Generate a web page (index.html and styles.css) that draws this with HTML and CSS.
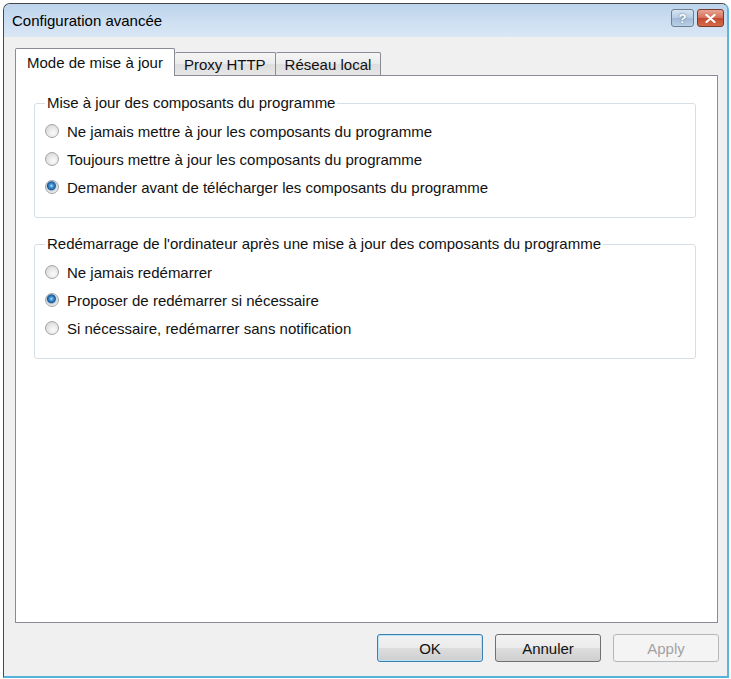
FILE: index.html
```html
<html>
<head>
    <link rel="stylesheet" href="styles.css">
</head>

<body>
    <div class="window">
        <div class="titlebar">
            <span class="title">Configuration avancée</span>
            <div class="controls">
                <span class="cbtn help">?</span>
                <span class="cbtn close">
                    <svg width="11" height="9" viewBox="0 0 11 9">
                        <path d="M1.5 1 L9.5 8 M9.5 1 L1.5 8" stroke="#fff" stroke-width="2.2" stroke-linecap="round"/>
                    </svg>
                </span>
            </div>
        </div>

        <form class="client" id="config">
            <div class="tabs">
                <span class="tab selected">Mode de mise à jour</span>
                <span class="tab">Proxy HTTP</span>
                <span class="tab">Réseau local</span>
            </div>

            <div class="panel">
                <fieldset class="group">
                    <legend>Mise à jour des composants du programme</legend>
                    <label class="option"><input type="radio" name="maj" value="never"> Ne jamais mettre à jour les composants du programme</label>
                    <label class="option"><input type="radio" name="maj" value="always"> Toujours mettre à jour les composants du programme</label>
                    <label class="option"><input type="radio" name="maj" value="ask" checked> Demander avant de télécharger les composants du programme</label>
                </fieldset>

                <fieldset class="group second">
                    <legend>Redémarrage de l'ordinateur après une mise à jour des composants du programme</legend>
                    <label class="option"><input type="radio" name="reboot" value="never"> Ne jamais redémarrer</label>
                    <label class="option"><input type="radio" name="reboot" value="propose" checked> Proposer de redémarrer si nécessaire</label>
                    <label class="option"><input type="radio" name="reboot" value="silent"> Si nécessaire, redémarrer sans notification</label>
                </fieldset>
            </div>

            <div class="buttons">
                <input class="btn default" type="submit" value="OK">
                <input class="btn" type="button" value="Annuler">
                <input class="btn" type="button" value="Apply" disabled>
            </div>
        </form>
    </div>
</body>
</html>
```

FILE: styles.css
```css
body{
    margin: 0;
    padding: 0;
    background: #fff;
    font-family: "Liberation Sans", Arial, sans-serif;
    font-size: 15px;
    color: #111;
}
.window{
    margin: 3px 0 0 3px;
    width: 726px;
    height: 675px;
    box-sizing: border-box;
    border: 1px solid #474747;
    border-right: 2px solid #5fb6da;
    border-bottom: 2px solid #56b2d8;
    border-radius: 7px 7px 0 0;
    background: #f0f0f0;
    display: flex;
    flex-direction: column;
    overflow: hidden;
}
.titlebar{
    height: 33px;
    flex: none;
    display: flex;
    align-items: center;
    padding: 0 3px 0 8px;
    background: linear-gradient(#bcd4ec, #cfe0f2 60%, #d9e7f5);
}
.title{
    font-size: 15px;
    color: #000;
}
.controls{
    margin-left: auto;
    align-self: flex-start;
    margin-top: 5px;
    display: flex;
    gap: 3px;
}
.cbtn{
    height: 18px;
    box-sizing: border-box;
    border: 1px solid #6e7f93;
    border-radius: 3px;
    display: flex;
    align-items: center;
    justify-content: center;
}
.help{
    width: 23px;
    background: linear-gradient(#d6e4f2, #b7cce2 50%, #a2bad6 51%, #b9d0e8);
    color: #fff;
    font-weight: bold;
    font-size: 13px;
    text-shadow: 0 0 2px #3b5f8a;
}
.close{
    width: 27px;
    border-color: #7a3a2e;
    background: linear-gradient(#e8a493, #d47058 50%, #c24a30 51%, #d56a4a);
}
.client{
    flex: 1;
    display: flex;
    flex-direction: column;
    margin: 0;
    padding: 11px 9px 0 11px;
}
.tabs{
    display: flex;
    align-items: flex-end;
    height: 28px;
    margin-bottom: -1px;
    position: relative;
    z-index: 1;
}
.tab{
    height: 23px;
    margin-bottom: 1px;
    box-sizing: border-box;
    padding: 0 9px;
    border: 1px solid #898c95;
    border-bottom: none;
    border-left: none;
    border-radius: 2px 2px 0 0;
    background: linear-gradient(#f6f6f6, #ebebeb 50%, #dedede 51%, #e6e6e6);
    display: flex;
    align-items: center;
    white-space: nowrap;
}
.tab.selected{
    height: 28px;
    margin-bottom: 0;
    padding: 0 11px;
    border-left: 1px solid #898c95;
    background: #fff;
}
.panel{
    flex: 1;
    border: 1px solid #898c95;
    background: #fff;
    padding: 19px 21px 0 18px;
}
.group{
    margin: 0;
    border: 1px solid #d5dfe5;
    border-radius: 3px;
    padding: 6px 10px 16px 10px;
}
.group legend{
    padding: 0 2px;
    line-height: 16px;
}
.group.second{
    margin-top: 18px;
}
.option{
    display: flex;
    align-items: center;
    height: 28px;
    gap: 8px;
    white-space: nowrap;
}
.option input{
    appearance: none;
    -webkit-appearance: none;
    width: 14px;
    height: 14px;
    margin: 0;
    flex: none;
    border: 1px solid #a3a6a8;
    border-radius: 50%;
    background: radial-gradient(circle at 60% 65%, #fbfbfb, #e4e4e4 55%, #cbcbcb);
}
.option input:checked{
    background: radial-gradient(circle at 45% 40%, #c3e8fc 0, #4f9fdc 1.5px, #1a5a9c 4px, #cfd6dc 5px, #ececec 7px);
}
.buttons{
    flex: none;
    display: flex;
    justify-content: flex-end;
    gap: 12px;
    padding: 11px 0 14px;
    margin-right: -1px;
}
.btn{
    width: 106px;
    height: 28px;
    margin: 0;
    box-sizing: border-box;
    border: 1px solid #707070;
    border-radius: 3px;
    background: linear-gradient(#f2f2f2, #ebebeb 50%, #dddddd 51%, #cfcfcf);
    font-family: "Liberation Sans", Arial, sans-serif;
    font-size: 15px;
    color: #111;
}
.btn.default{
    border-color: #3c7fb1;
    box-shadow: inset 0 0 0 1px #b9e1f7;
}
.btn:disabled{
    border-color: #b5b8bb;
    background: #f4f4f4;
    color: #a2a2a2;
}
```
